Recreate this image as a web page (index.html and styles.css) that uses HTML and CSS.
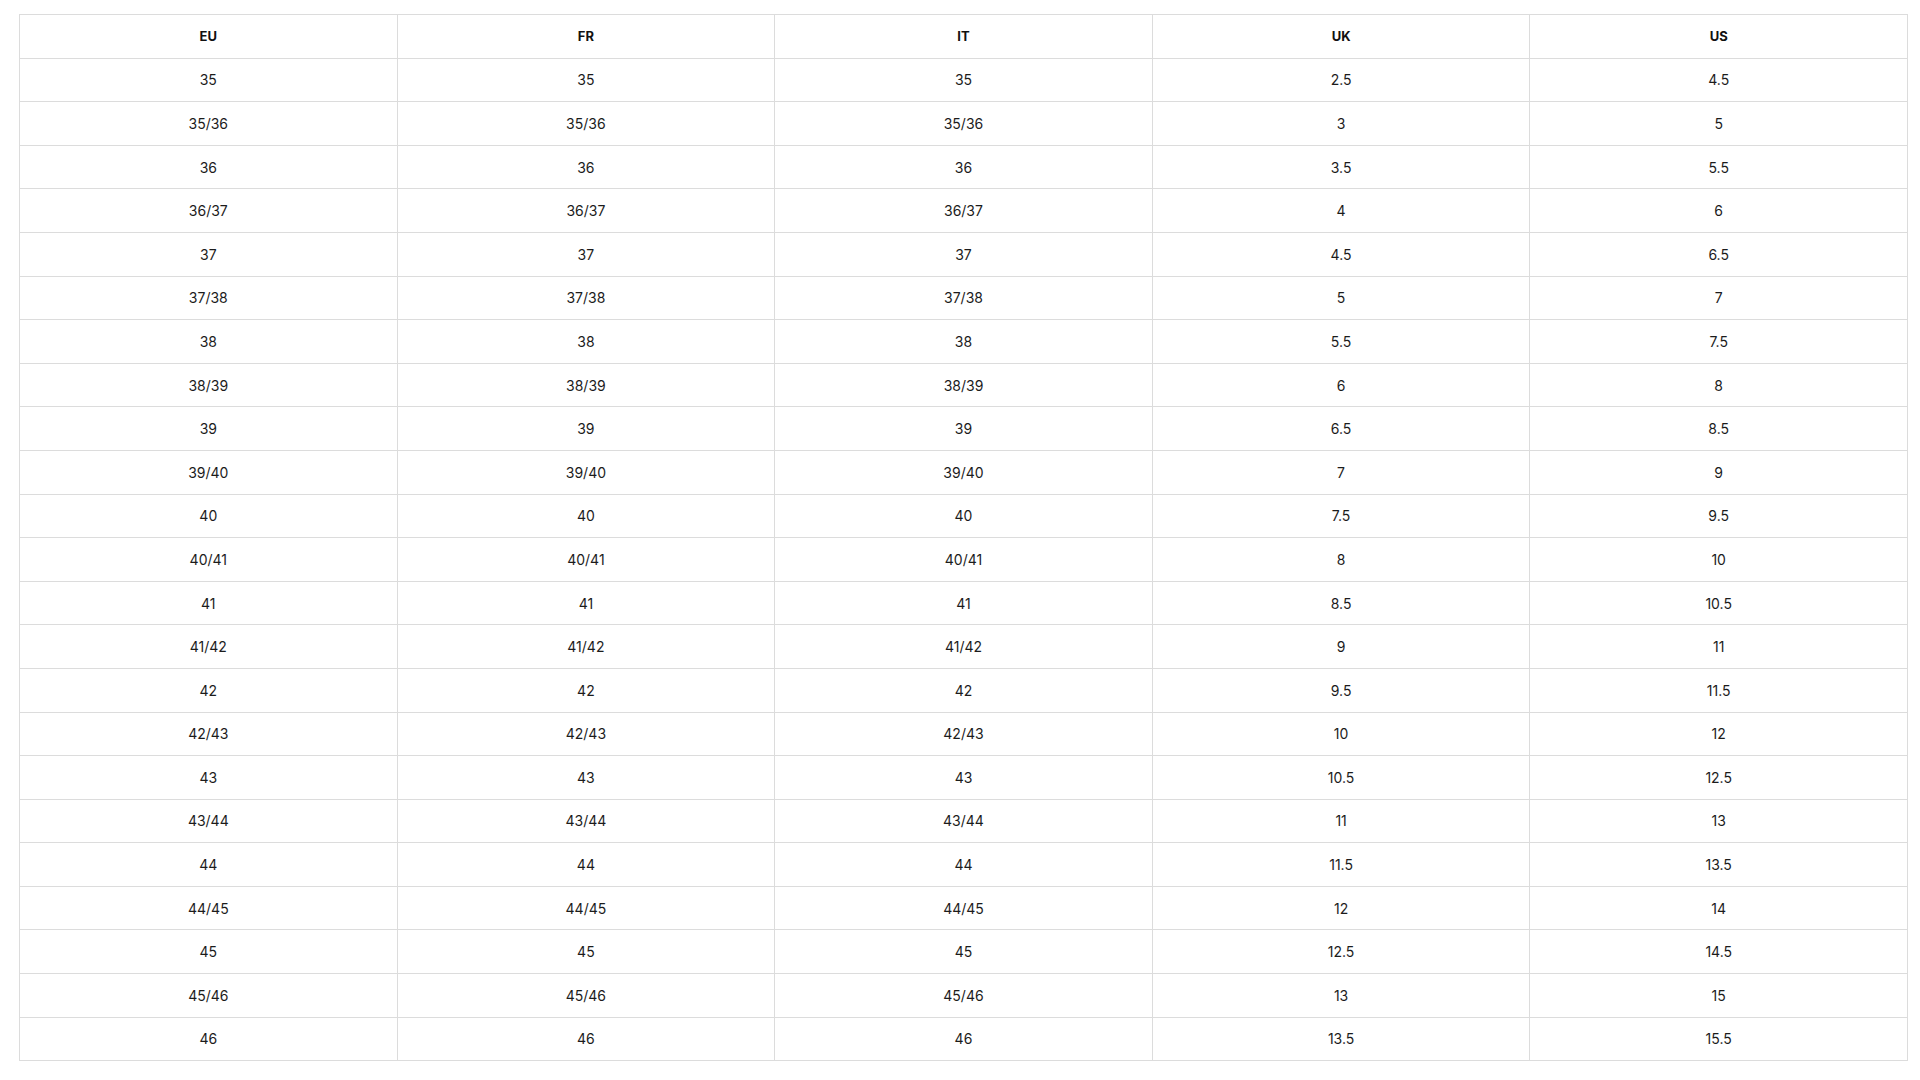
FILE: index.html
```html
<!DOCTYPE html>
<html>
<head>
<meta charset="utf-8">
<link rel="stylesheet" href="styles.css">
</head>
<body>
<div class="wrap">
<table class="size-table">
<thead>
<tr><th>EU</th><th>FR</th><th>IT</th><th>UK</th><th>US</th></tr>
</thead>
<tbody>
<tr><td>35</td><td>35</td><td>35</td><td>2.5</td><td>4.5</td></tr>
<tr><td>35/36</td><td>35/36</td><td>35/36</td><td>3</td><td>5</td></tr>
<tr><td>36</td><td>36</td><td>36</td><td>3.5</td><td>5.5</td></tr>
<tr><td>36/37</td><td>36/37</td><td>36/37</td><td>4</td><td>6</td></tr>
<tr><td>37</td><td>37</td><td>37</td><td>4.5</td><td>6.5</td></tr>
<tr><td>37/38</td><td>37/38</td><td>37/38</td><td>5</td><td>7</td></tr>
<tr><td>38</td><td>38</td><td>38</td><td>5.5</td><td>7.5</td></tr>
<tr><td>38/39</td><td>38/39</td><td>38/39</td><td>6</td><td>8</td></tr>
<tr><td>39</td><td>39</td><td>39</td><td>6.5</td><td>8.5</td></tr>
<tr><td>39/40</td><td>39/40</td><td>39/40</td><td>7</td><td>9</td></tr>
<tr><td>40</td><td>40</td><td>40</td><td>7.5</td><td>9.5</td></tr>
<tr><td>40/41</td><td>40/41</td><td>40/41</td><td>8</td><td>10</td></tr>
<tr><td>41</td><td>41</td><td>41</td><td>8.5</td><td>10.5</td></tr>
<tr><td>41/42</td><td>41/42</td><td>41/42</td><td>9</td><td>11</td></tr>
<tr><td>42</td><td>42</td><td>42</td><td>9.5</td><td>11.5</td></tr>
<tr><td>42/43</td><td>42/43</td><td>42/43</td><td>10</td><td>12</td></tr>
<tr><td>43</td><td>43</td><td>43</td><td>10.5</td><td>12.5</td></tr>
<tr><td>43/44</td><td>43/44</td><td>43/44</td><td>11</td><td>13</td></tr>
<tr><td>44</td><td>44</td><td>44</td><td>11.5</td><td>13.5</td></tr>
<tr><td>44/45</td><td>44/45</td><td>44/45</td><td>12</td><td>14</td></tr>
<tr><td>45</td><td>45</td><td>45</td><td>12.5</td><td>14.5</td></tr>
<tr><td>45/46</td><td>45/46</td><td>45/46</td><td>13</td><td>15</td></tr>
<tr><td>46</td><td>46</td><td>46</td><td>13.5</td><td>15.5</td></tr>
</tbody>
</table>
</div>
</body>
</html>
```
FILE: styles.css
```css
html, body {
  margin: 0;
  padding: 0;
  background: #ffffff;
}
.wrap {
  padding: 14px 12px 0 19px;
}
.size-table {
  width: 100%;
  border-collapse: collapse;
  table-layout: fixed;
  font-family: Inter, "Noto Sans", sans-serif;
  font-size: 14px;
  color: #1c1c1c;
}
.size-table th,
.size-table td {
  border: 1px solid #dcdcdc;
  text-align: center;
  vertical-align: middle;
  height: 42.6px;
  padding: 0;
}
.size-table th {
  font-weight: 700;
  font-size: 13px;
  color: #111111;
}
```
